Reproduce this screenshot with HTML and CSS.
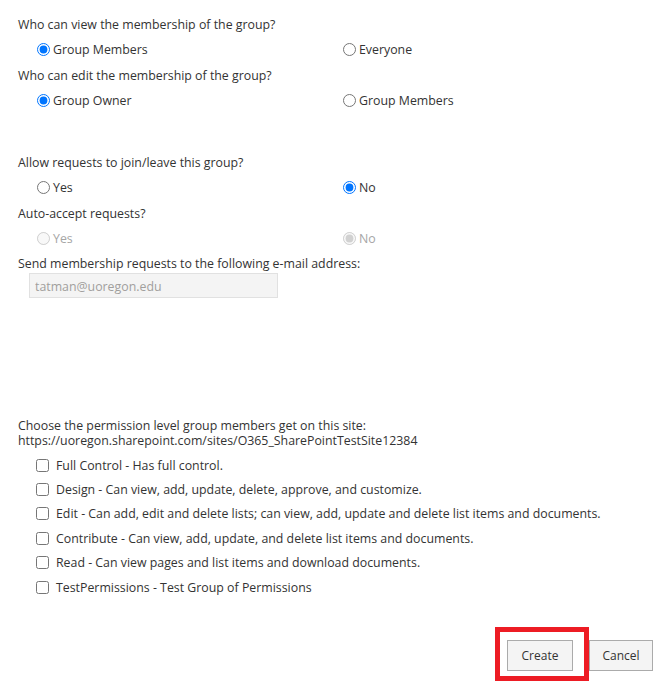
FILE: index.html
```html
<!DOCTYPE html>
<html>
<head>
<meta charset="utf-8">
<link rel="stylesheet" href="styles.css">
</head>
<body>
<div class="page">
  <section class="group first">
    <div class="question">Who can view the membership of the group?</div>
    <div class="options">
      <label class="opt"><input type="radio" name="view" checked>Group Members</label>
      <label class="opt"><input type="radio" name="view">Everyone</label>
    </div>
    <div class="question next">Who can edit the membership of the group?</div>
    <div class="options">
      <label class="opt"><input type="radio" name="edit" checked>Group Owner</label>
      <label class="opt"><input type="radio" name="edit">Group Members</label>
    </div>
  </section>

  <section class="group second">
    <div class="question">Allow requests to join/leave this group?</div>
    <div class="options">
      <label class="opt"><input type="radio" name="allow">Yes</label>
      <label class="opt"><input type="radio" name="allow" checked>No</label>
    </div>
    <div class="question next">Auto-accept requests?</div>
    <div class="options">
      <label class="opt disabled"><input type="radio" name="auto" disabled>Yes</label>
      <label class="opt disabled"><input type="radio" name="auto" checked disabled>No</label>
    </div>
    <div class="question short">Send membership requests to the following e-mail address:</div>
    <div class="email-row">
      <input class="email" type="text" value="tatman@uoregon.edu" disabled>
    </div>
  </section>

  <section class="group third">
    <div class="intro">
      <div class="intro-line">Choose the permission level group members get on this site:</div>
      <div class="intro-line">https://uoregon.sharepoint.com/sites/O365_SharePointTestSite12384</div>
    </div>
    <ul class="perms">
      <li><label class="check"><input type="checkbox">Full Control - Has full control.</label></li>
      <li><label class="check"><input type="checkbox">Design - Can view, add, update, delete, approve, and customize.</label></li>
      <li><label class="check"><input type="checkbox">Edit - Can add, edit and delete lists; can view, add, update and delete list items and documents.</label></li>
      <li><label class="check"><input type="checkbox">Contribute - Can view, add, update, and delete list items and documents.</label></li>
      <li><label class="check"><input type="checkbox">Read - Can view pages and list items and download documents.</label></li>
      <li><label class="check"><input type="checkbox">TestPermissions - Test Group of Permissions</label></li>
    </ul>
  </section>

  <div class="actions">
    <div class="highlight"><button class="btn" type="button">Create</button></div>
    <button class="btn cancel" type="button">Cancel</button>
  </div>
</div>
</body>
</html>
```
FILE: styles.css
```css
html, body {
  margin: 0;
  padding: 0;
  background: #ffffff;
}
body {
  font-family: "Open Sans", "Noto Sans", "Liberation Sans", sans-serif;
  font-size: 12.35px;
  color: #333333;
}
.page {
  width: 664px;
  padding: 12px 0 0 18px;
  box-sizing: border-box;
}
.question {
  height: 25px;
  line-height: 25px;
}
.question.next {
  margin-top: 1px;
}
.options {
  display: flex;
  height: 25px;
  align-items: center;
  padding-left: 14px;
}
.opt {
  display: flex;
  align-items: center;
  width: 306px;
}
.opt input {
  margin: 0 3px 0 5px;
  width: 13px;
  height: 13px;
}
.opt.disabled {
  color: #a6a6a6;
}
.second {
  margin-top: 37px;
}
.question.short {
  height: 22px;
  line-height: 25px;
}
.email-row {
  padding-left: 11px;
}
.email {
  width: 249px;
  height: 25px;
  box-sizing: border-box;
  border: 1px solid #e1e1e1;
  background: #f4f4f4;
  color: #a19f9d;
  font-family: inherit;
  font-size: 12.35px;
  padding: 1px 5px 0;
  margin: 0;
}
.third {
  margin-top: 120px;
}
.intro-line {
  height: 15px;
  line-height: 15px;
}
.perms {
  list-style: none;
  margin: 5px 0 0 0;
  padding: 0 0 0 18px;
}
.perms li {
  height: 24.4px;
  display: flex;
  align-items: center;
}
.check {
  display: flex;
  align-items: center;
}
.check input {
  margin: 0 7px 0 0;
  width: 13px;
  height: 13px;
}
.actions {
  display: flex;
  justify-content: flex-end;
  align-items: flex-start;
  margin-top: 28px;
  padding-right: 11px;
}
.highlight {
  border: 5px solid #ed1c24;
  padding: 8px 11px 5px 7px;
}
.btn {
  width: 66px;
  height: 31px;
  box-sizing: border-box;
  border: 1px solid #ababab;
  background: #f4f4f4;
  color: #333333;
  font-family: inherit;
  font-size: 12px;
  padding: 0;
  margin: 0;
}
.btn.cancel {
  width: 64px;
  margin-top: 13px;
}
```
